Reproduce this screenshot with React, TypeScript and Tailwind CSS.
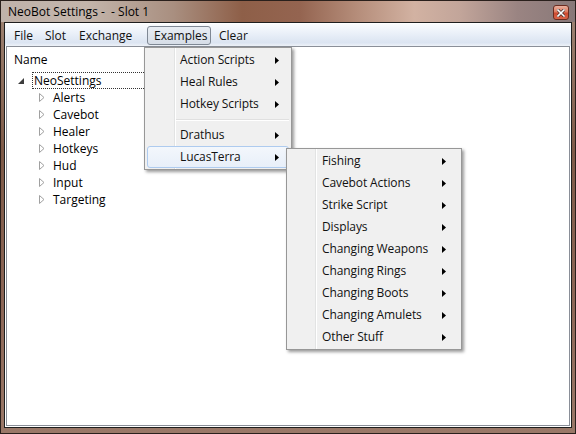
import React from "react";

const Arrow = () => (
  <svg width="4" height="7" viewBox="0 0 4 7" className="block">
    <polygon points="0,0 4,3.5 0,7" fill="#000" />
  </svg>
);

type Entry = { label: string; hl?: boolean } | "sep";

function MenuItems({ items, arrowMr }: { items: Entry[]; arrowMr: string }) {
  return (
    <>
      {items.map((it, i) =>
        it === "sep" ? (
          <div key={i} className="h-[9px] flex flex-col justify-center pl-[29px]">
            <div className="h-px bg-[#e0e0e0]" />
            <div className="h-px bg-white" />
          </div>
        ) : (
          <div
            key={i}
            className={
              it.hl
                ? "h-[22px] flex items-center pl-[32px] rounded-[3px] border border-[#aecbef] bg-[linear-gradient(180deg,#f3f7fc_0%,#e8eff9_100%)]"
                : "h-[22px] flex items-center pl-[32px] border border-transparent"
            }
          >
            <span className="text-[12px] leading-[16px] text-[#111] tracking-[-0.1px]">{it.label}</span>
            <span className={"ml-auto " + arrowMr}>
              <Arrow />
            </span>
          </div>
        )
      )}
    </>
  );
}

const Expanded = () => (
  <svg width="6" height="6" viewBox="0 0 6 6" className="block">
    <polygon points="6,0 6,6 0,6" fill="#3c3c3c" />
  </svg>
);

const Collapsed = () => (
  <svg width="6" height="9" viewBox="0 0 6 9" className="block">
    <polygon points="0.5,0.5 5,4.5 0.5,8.5" fill="#fff" stroke="#a0a0a0" strokeWidth="1" />
  </svg>
);

export default function App() {
  const children = ["Alerts", "Cavebot", "Healer", "Hotkeys", "Hud", "Input", "Targeting"];
  const menu1: Entry[] = [
    { label: "Action Scripts" },
    { label: "Heal Rules" },
    { label: "Hotkey Scripts" },
    "sep",
    { label: "Drathus" },
    { label: "LucasTerra", hl: true },
  ];
  const menu2: Entry[] = [
    { label: "Fishing" },
    { label: "Cavebot Actions" },
    { label: "Strike Script" },
    { label: "Displays" },
    { label: "Changing Weapons" },
    { label: "Changing Rings" },
    { label: "Changing Boots" },
    { label: "Changing Amulets" },
    { label: "Other Stuff" },
  ];
  const menubar = [
    { l: "File", w: "w-[30px]" },
    { l: "Slot", w: "w-[33px]" },
    { l: "Exchange", w: "w-[74px]" },
    { l: "Examples", w: "w-[64px]", active: true },
    { l: "Clear", w: "w-[40px]" },
  ];

  return (
    <div className="relative w-[576px] h-[434px] overflow-hidden flex flex-col font-['Open_Sans',sans-serif] border border-[#2a201c] bg-[linear-gradient(180deg,#a08676_0%,#7e5a48_35%,#8c6656_70%,#9a7868_100%)]">
      {/* title bar */}
      <div className="h-[21px] flex items-start shrink-0 bg-[linear-gradient(90deg,#bfb2aa_0%,#c3b5ab_15%,#a98f80_30%,#8e5f48_42%,#946450_52%,#b58d7a_62%,#d2b2a2_72%,#c2a59a_80%,#9a8482_90%,#887878_100%)]">
        <span className="pl-[7px] pt-[3px] text-[12px] leading-[16px] text-black whitespace-pre">NeoBot Settings -  - Slot 1</span>
        <div className="ml-auto mt-[4px] mr-[6px] w-[16px] h-[15px] rounded-[3px] border border-[#6b2c20] bg-[linear-gradient(180deg,#eab19f_0%,#de7a60_45%,#cc4a30_55%,#d8654a_100%)] flex items-center justify-center">
          <svg width="8" height="8" viewBox="0 0 8 8" className="block">
            <path d="M1 1 L7 7 M7 1 L1 7" stroke="#3a2a28" strokeWidth="3" strokeLinecap="square" />
            <path d="M1 1 L7 7 M7 1 L1 7" stroke="#ffffff" strokeWidth="1.6" strokeLinecap="square" />
          </svg>
        </div>
      </div>

      {/* client */}
      <div className="flex-1 mx-[3px] mb-[5px] border border-[#1e1e1e] bg-white flex flex-col">
        {/* menubar */}
        <div className="h-[23px] shrink-0 flex items-end pb-[1px] pl-[2px] border-t border-white bg-[linear-gradient(180deg,#fafcfe_0%,#e9eff8_45%,#dbe4f1_85%,#eef2f8_100%)]">
          {menubar.map((m) => (
            <div key={m.l} className={m.w + " mr-[1px] h-[19px]"}>
              <div
                className={
                  m.active
                    ? "h-full flex items-center pl-[6px] rounded-[3px] border border-[#7f8894] bg-[linear-gradient(180deg,#e8edf3_0%,#d6dde7_100%)]"
                    : "h-full flex items-center pl-[6px] border border-transparent"
                }
              >
                <span className="text-[12px] leading-[16px] text-[#111]">{m.l}</span>
              </div>
            </div>
          ))}
        </div>

        {/* tree */}
        <div className="flex-1 mx-[1px] mb-[1px] border border-[#8a8f98] bg-white flex flex-col">
          <div className="h-[25px] flex items-center pl-[7px] shrink-0">
            <span className="text-[12px] leading-[16px] text-black">Name</span>
          </div>
          <div className="h-[17px] flex items-center pl-[11px]">
            <div className="w-[14px] flex items-center">
              <Expanded />
            </div>
            <div className="w-[200px] h-[17px] flex items-center px-[1px] border border-dotted border-[#333]">
              <span className="text-[12px] leading-[16px] text-black">NeoSettings</span>
            </div>
          </div>
          {children.map((c) => (
            <div key={c} className="h-[17px] flex items-center pl-[32px]">
              <div className="w-[14px] flex items-center">
                <Collapsed />
              </div>
              <span className="text-[12px] leading-[16px] text-black">{c}</span>
            </div>
          ))}
        </div>
      </div>

      {/* Examples dropdown */}
      <div className="absolute left-[143px] top-[46px] w-[148px] py-[1px] px-[2px] border border-[#979797] shadow-[2px_2px_3px_rgba(0,0,0,0.4)] bg-[linear-gradient(90deg,#f0f0f0_29px,#e2e3e3_29px,#e2e3e3_30px,#ffffff_30px,#ffffff_31px,#f0f0f0_31px)]">
        <MenuItems items={menu1} arrowMr="mr-[9px]" />
      </div>

      {/* LucasTerra submenu */}
      <div className="absolute left-[285px] top-[147px] w-[176px] py-[1px] px-[2px] border border-[#979797] shadow-[2px_2px_3px_rgba(0,0,0,0.4)] bg-[linear-gradient(90deg,#f0f0f0_28px,#e2e3e3_28px,#e2e3e3_29px,#ffffff_29px,#ffffff_30px,#f0f0f0_30px)]">
        <MenuItems items={menu2} arrowMr="mr-[12px]" />
      </div>
    </div>
  );
}
